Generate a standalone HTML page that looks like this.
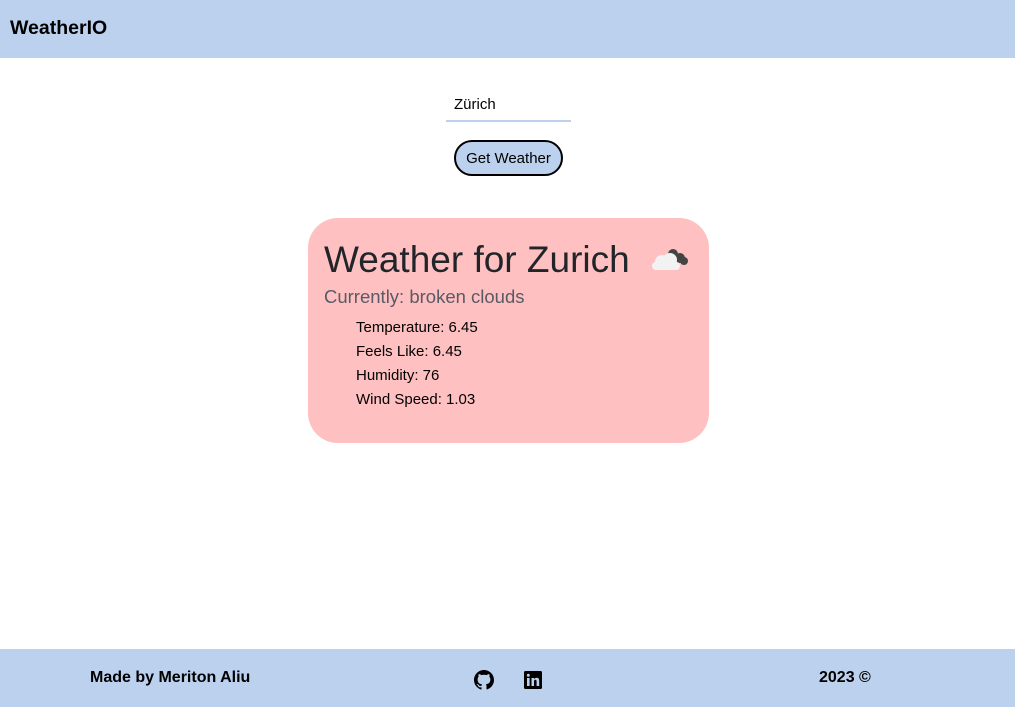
<!DOCTYPE html>
<html><head><meta charset="utf-8"><style>
body{margin:0;width:1015px;height:707px;position:relative;background:#fff;font-family:"Liberation Sans",sans-serif;overflow:hidden}
.hdr{position:absolute;left:0;top:0;width:1015px;height:58px;background:#bcd1ee}
.hdr b{position:absolute;left:10px;top:17px;font-size:19.5px}
.ftr{position:absolute;left:0;top:649px;width:1015px;height:58px;background:#bcd1ee;font-weight:bold;font-size:16px}
.inp{position:absolute;left:446px;top:94px;width:125px;height:28px;border-bottom:2px solid #bcd1ee;box-sizing:border-box;padding-left:8px;line-height:22px;font-size:15px}
.btn{position:absolute;left:454px;top:140px;width:109px;height:36px;box-sizing:border-box;border:2px solid #000;border-radius:18px;background:#bcd1ee;font-size:15px;text-align:center;line-height:34px}
.card{position:absolute;left:308px;top:218px;width:401px;height:225px;background:#fec0c0;border-radius:30px;color:#212529}
h1{position:absolute;left:16px;top:20px;margin:0;font-weight:normal;font-size:37px;line-height:44px}
.cur{position:absolute;left:16px;top:68px;font-size:18.5px;color:#5a5a66}
ul{position:absolute;left:48px;top:98px;margin:0;padding:0;list-style:none;font-size:15px;line-height:24px;color:#000}
</style></head><body>
<div class="hdr"><b>WeatherIO</b></div>
<div class="inp">Zürich</div>
<div class="btn">Get Weather</div>
<div class="card">
<h1>Weather for Zurich</h1>
<svg style="position:absolute;left:342px;top:28px" width="38" height="26" viewBox="0 0 38 26">
<circle cx="23" cy="8" r="5" fill="#444"/><circle cx="30" cy="12" r="5" fill="#444"/><circle cx="34" cy="15" r="4" fill="#444"/>
<circle cx="12" cy="16" r="7" fill="#f2f2f2"/><circle cx="20" cy="14" r="7" fill="#f2f2f2"/><rect x="2" y="16" width="28" height="8" rx="4" fill="#f2f2f2"/>
</svg>
<div class="cur">Currently: broken clouds</div>
<ul><li>Temperature: 6.45</li><li>Feels Like: 6.45</li><li>Humidity: 76</li><li>Wind Speed: 1.03</li></ul>
</div>
<div class="ftr">
<span style="position:absolute;left:90px;top:20px">Made by Meriton Aliu</span>
<svg style="position:absolute;left:474px;top:21px" width="20" height="20" viewBox="0 0 16 16"><path fill="#000" d="M8 0C3.6 0 0 3.6 0 8c0 3.5 2.3 6.5 5.5 7.6.4.1.5-.2.5-.4v-1.4c-2.2.5-2.7-1-2.7-1-.4-.9-.9-1.2-.9-1.2-.7-.5.1-.5.1-.5.8.1 1.2.8 1.2.8.7 1.2 1.9.9 2.3.7.1-.5.3-.9.5-1.100-1.8-.2-3.6-.9-3.6-4 0-.9.3-1.6.8-2.1-.1-.2-.4-1 .1-2.1 0 0 .7-.2 2.2.8.6-.2 1.3-.3 2-.3s1.4.1 2 .3c1.5-1 2.2-.8 2.2-.8.4 1.1.2 1.9.1 2.1.5.6.8 1.3.8 2.1 0 3.1-1.900 3.7-3.6 3.9.3.3.5.8.5 1.5v2.2c0 .2.1.5.6.4C13.7 14.5 16 11.5 16 8c0-4.4-3.6-8-8-8z"/></svg>
<svg style="position:absolute;left:524px;top:22px" width="18" height="18" viewBox="0 0 18 18"><rect width="18" height="18" rx="1.5" fill="#000"/><rect x="3" y="7" width="2.6" height="8" fill="#bcd1ee"/><circle cx="4.3" cy="4.2" r="1.5" fill="#bcd1ee"/><path d="M7.5 7h2.5v1.2c.5-.8 1.4-1.4 2.6-1.4 2 0 2.6 1.2 2.6 3.2V15h-2.6v-4.5c0-1-.3-1.7-1.2-1.7-1 0-1.4.8-1.4 1.8V15H7.5z" fill="#bcd1ee"/></svg>
<span style="position:absolute;left:819px;top:20px">2023 ©</span>
</div>
</body></html>
